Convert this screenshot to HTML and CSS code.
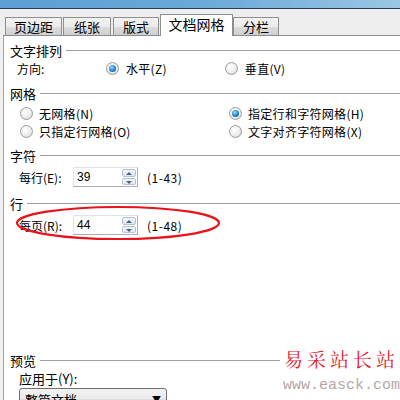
FILE: index.html
```html
<!doctype html>
<html lang="zh-CN">
  <head>
    <meta charset="UTF-8" />
    <title>页面设置 - 文档网格</title>
    <link rel="stylesheet" href="styles.css">
  </head>
  <body>
    <div class="dialog">
      <div class="titlebar"></div>
      <div class="tabstrip">
        <div class="tab">页边距</div>
        <div class="tab">纸张</div>
        <div class="tab">版式</div>
        <div class="tab active">文档网格</div>
        <div class="tab">分栏</div>
      </div>

      <div class="panel">
        <div class="legend legend-first"><span>文字排列</span></div>
        <div class="row dir-row">
          <span class="label">方向:</span>
          <span class="radio checked"></span><span class="opt">水平(Z)</span>
          <span class="radio radio-right"></span><span class="opt">垂直(V)</span>
        </div>

        <div class="legend legend-grid"><span>网格</span></div>
        <div class="grid-opts">
          <div class="opt-item"><span class="radio"></span><span class="opt">无网格(N)</span></div>
          <div class="opt-item"><span class="radio checked"></span><span class="opt">指定行和字符网格(H)</span></div>
          <div class="opt-item"><span class="radio"></span><span class="opt">只指定行网格(O)</span></div>
          <div class="opt-item"><span class="radio"></span><span class="opt">文字对齐字符网格(X)</span></div>
        </div>

        <div class="legend legend-chars"><span>字符</span></div>
        <div class="row spin-row">
          <span class="label">每行(E):</span>
          <div class="spin">
            <span class="spin-value">39</span>
            <div class="spin-btns"><span class="up"></span><span class="down"></span></div>
          </div>
          <span class="range">(1-43)</span>
        </div>

        <div class="legend legend-lines"><span>行</span></div>
        <div class="row spin-row">
          <span class="label">每页(R):</span>
          <div class="spin">
            <span class="spin-value">44</span>
            <div class="spin-btns"><span class="up"></span><span class="down"></span></div>
          </div>
          <span class="range">(1-48)</span>
        </div>

        <div class="bottom">
          <div class="preview">
            <div class="legend legend-preview"><span>预览</span></div>
            <div class="apply-label">应用于(Y):</div>
            <div class="select"><span>整篇文档</span><span class="caret">▼</span></div>
          </div>
          <div class="watermark">
            <div class="wm-title">易采站长站</div>
            <div class="wm-url">www.easck.com</div>
          </div>
        </div>

        <!-- hand-drawn highlight around the lines-per-page field -->
        <svg class="circle-mark" width="210" height="40" viewBox="0 0 210 40">
          <ellipse cx="105" cy="19" rx="101" ry="16" fill="none" stroke="#e8141c" stroke-width="2.2" />
        </svg>
      </div>
    </div>
  </body>
</html>
```

FILE: styles.css
```css
body {
  margin: 0;
  padding: 0;
  font-family: "Noto Sans CJK SC", "Liberation Sans", sans-serif;
  font-size: 12px;
  color: #000;
  background: #ffffff;
}

.dialog {
  width: 400px;
  height: 400px;
  overflow: hidden;
  background: #f0f0f0;
  display: flex;
  flex-direction: column;
}

.titlebar {
  height: 8px;
  flex: none;
  background: linear-gradient(90deg, #5d9fd3 0%, #6aa9d8 50%, #9cc7e4 100%);
  border-bottom: 1px solid #243f5c;
}

.tabstrip {
  height: 26px;
  flex: none;
  display: flex;
  align-items: flex-end;
  padding-left: 5px;
  background: #eeeeee;
  position: relative;
  z-index: 2;
}

.tab {
  box-sizing: border-box;
  height: 18px;
  margin-right: 1px;
  border: 1px solid #8e8f8f;
  border-bottom: none;
  background: linear-gradient(#f2f2f2 0%, #ebebeb 50%, #dddddd 51%, #cfcfcf 100%);
  font-size: 13px;
  line-height: 18px;
  text-align: center;
  white-space: nowrap;
}

.tab:nth-child(1) { width: 57px; }
.tab:nth-child(2) { width: 48px; margin-right: 2px; }
.tab:nth-child(3) { width: 46px; margin-right: 1px; }
.tab:nth-child(5) { width: 46px; }

.tab.active {
  width: 73px;
  height: 22px;
  margin-right: 0;
  margin-bottom: -1px;
  background: #ffffff;
  line-height: 19px;
  font-size: 14px;
}

.panel {
  flex: 1;
  margin-left: 3px;
  background: #ffffff;
  border-left: 1px solid #a0a0a0;
  border-top: 1px solid #898c95;
  position: relative;
  display: flex;
  flex-direction: column;
}

.legend {
  display: flex;
  align-items: center;
  height: 16px;
  font-size: 13px;
}

.legend::after {
  content: "";
  flex: 1;
  height: 1px;
  background: #a0a0a0;
  margin-left: 4px;
}

.legend span {
  padding-left: 6px;
}

.legend-first { margin-top: 6px; }
.legend-grid { margin-top: 8px; }
.legend-chars { margin-top: 7px; }
.legend-lines { margin-top: 8px; }

.row {
  display: flex;
  align-items: center;
}

.label {
  padding-left: 13px;
}

.dir-row {
  height: 18px;
  margin-top: 1px;
}

.dir-row .label {
  width: 89px;
}

.radio {
  width: 11px;
  height: 11px;
  border-radius: 50%;
  border: 1px solid #9c9c9c;
  background: radial-gradient(circle at 40% 35%, #ffffff 0%, #f0f0f0 45%, #d4d4d4 100%);
  flex: none;
  position: relative;
}

.radio.checked::after {
  content: "";
  position: absolute;
  left: 2px;
  top: 2px;
  width: 7px;
  height: 7px;
  border-radius: 50%;
  background: radial-gradient(circle at 40% 35%, #9be3ff 0%, #2f8fd6 45%, #0a4f8c 100%);
}

.opt {
  margin-left: 7px;
  letter-spacing: 0.3px;
}

.radio-right {
  margin-left: 58px;
}

.dir-row .opt:first-of-type {
  width: 50px;
}

.grid-opts {
  display: grid;
  grid-template-columns: 209px 1fr;
  grid-auto-rows: 18px;
  padding-left: 16px;
  margin-top: 3px;
}

.opt-item {
  display: flex;
  align-items: center;
}

.opt-item .opt {
  margin-left: 6px;
}

.spin-row {
  height: 20px;
  margin-top: 4px;
}

.spin-row .label {
  padding-left: 15px;
  width: 54px;
}

.spin {
  width: 63px;
  height: 18px;
  border: 1px solid #abadb3;
  border-top-color: #e2e3ea;
  border-left-color: #e2e3ea;
  display: flex;
  background: #ffffff;
}

.spin-value {
  flex: 1;
  padding-left: 3px;
  line-height: 18px;
  font-family: "Liberation Sans", sans-serif;
  font-size: 12px;
}

.spin-btns {
  width: 14px;
  display: flex;
  flex-direction: column;
  padding: 1px 1px 1px 0;
  gap: 1px;
}

.spin-btns span {
  flex: 1;
  border: 1px solid #b6c2d0;
  border-radius: 2px;
  background: linear-gradient(#f4f7fb, #dce6f2);
  position: relative;
}

.spin-btns .up::after,
.spin-btns .down::after {
  content: "";
  position: absolute;
  left: 3px;
  border-left: 3px solid transparent;
  border-right: 3px solid transparent;
}

.spin-btns .up::after {
  top: 2px;
  border-bottom: 3px solid #4d6185;
}

.spin-btns .down::after {
  top: 2px;
  border-top: 3px solid #4d6185;
}

.range {
  margin-left: 9px;
  letter-spacing: 0.5px;
}

.bottom {
  margin-top: auto;
  display: flex;
  align-items: flex-start;
}

.preview {
  width: 277px;
}

.apply-label {
  padding-left: 15px;
  height: 20px;
  line-height: 22px;
  font-size: 13px;
}

.select {
  margin-left: 15px;
  width: 136px;
  height: 20px;
  padding: 0 5px;
  border: 1px solid #707070;
  border-radius: 3px;
  background: linear-gradient(#f2f2f2 0%, #ebebeb 50%, #dddddd 51%, #cfcfcf 100%);
  display: flex;
  justify-content: space-between;
  align-items: center;
  font-size: 13px;
  margin-bottom: -10px;
}

.caret {
  font-size: 9px;
}

.watermark {
  flex: 1;
  margin-top: -6px;
}

.wm-title {
  color: #e5202c;
  font-family: "Noto Serif CJK SC", "Noto Sans CJK SC", serif;
  font-size: 19px;
  letter-spacing: 4px;
  line-height: 26px;
  padding-left: 4px;
  white-space: nowrap;
}

.wm-url {
  color: #b5a7a8;
  font-family: "Liberation Mono", monospace;
  font-size: 15px;
  line-height: 20px;
  margin-top: 4px;
  padding-left: 3px;
  white-space: nowrap;
}

.circle-mark {
  position: absolute;
  left: 9px;
  top: 168px;
}
```
